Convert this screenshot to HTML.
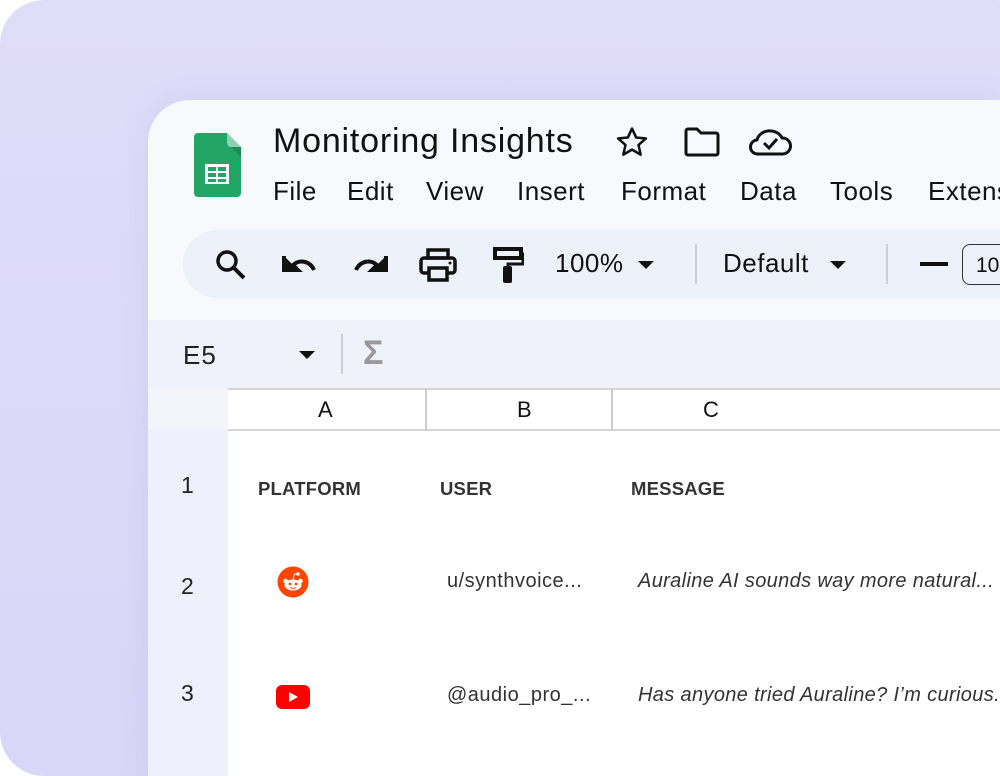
<!DOCTYPE html>
<html><head><style>
*{margin:0;padding:0;box-sizing:border-box}
html,body{width:1000px;height:776px;overflow:hidden}
body{background:#fff;font-family:"Liberation Sans",sans-serif;position:relative}
.bg{position:absolute;left:0;top:0;width:1040px;height:776px;border-radius:44px 44px 0 44px;background:linear-gradient(180deg,#e0ddf8,#d9d6f8)}
.card{position:absolute;left:148px;top:100px;width:852px;height:676px;border-radius:42px 0 0 0;background:#f8f9fd;overflow:hidden;box-shadow:0 0 30px rgba(120,110,200,.12)}
.a{position:absolute;white-space:nowrap}
.t{font-size:34px;color:#111;letter-spacing:.8px}
.m{font-size:26px;color:#111;top:176px;letter-spacing:.5px}
.pill{position:absolute;left:183px;top:230px;width:850px;height:68px;border-radius:34px;background:#edf1fa}
.sep{position:absolute;width:2px;background:#ccd;}
.tb{font-size:26px;color:#111;top:248px;letter-spacing:.5px}
.tri{position:absolute;width:0;height:0;border-left:8px solid transparent;border-right:8px solid transparent;border-top:8px solid #111}
.cell{font-size:20px;color:#333;letter-spacing:.5px}
.it{font-style:italic;color:#333;font-size:20px;letter-spacing:.35px}
.h{font-weight:bold;font-size:18.5px;color:#333;letter-spacing:.2px}
</style></head><body>
<div class="bg"></div>
<div class="card"></div>
<svg class="a" style="left:194px;top:133px" width="47" height="64" viewBox="0 0 47 64">
<path d="M4 0H33L47 14V60a4 4 0 0 1-4 4H4a4 4 0 0 1-4-4V4a4 4 0 0 1 4-4z" fill="#23a566"/>
<path d="M33 0L47 14H37a4 4 0 0 1-4-4z" fill="#8ed1b1"/>
<path d="M37 14L47 24V14z" fill="#1c8c55"/>
<rect x="11" y="31" width="24" height="20" fill="#fff"/>
<g fill="#23a566"><rect x="14" y="34" width="8" height="4"/><rect x="24" y="34" width="8" height="4"/><rect x="14" y="40" width="8" height="4"/><rect x="24" y="40" width="8" height="4"/><rect x="14" y="46" width="8" height="3"/><rect x="24" y="46" width="8" height="3"/></g>
</svg>
<div class="a t" style="left:273px;top:122px">Monitoring Insights</div>
<svg class="a" style="left:614px;top:125px" width="36" height="34" viewBox="0 0 24 24"><path d="M12 2.5l2.9 6.3 6.9.7-5.2 4.6 1.5 6.8L12 17.4l-6.1 3.5 1.5-6.8-5.2-4.6 6.9-.7z" fill="none" stroke="#111" stroke-width="1.8" stroke-linejoin="round"/></svg>
<svg class="a" style="left:683px;top:126px" width="38" height="32" viewBox="0 0 38 32"><path d="M3 5a2 2 0 0 1 2-2h9l4 4h15a2 2 0 0 1 2 2v18a2 2 0 0 1-2 2H5a2 2 0 0 1-2-2z" fill="none" stroke="#111" stroke-width="3" stroke-linejoin="round"/></svg>
<svg class="a" style="left:749px;top:126px" width="43" height="32" viewBox="0 0 43 32"><path d="M11 28H9a7 7 0 0 1-1-14A13 11 0 0 1 33 12a8 8 0 0 1 1 16z" fill="none" stroke="#111" stroke-width="3" stroke-linejoin="round"/><path d="M15 17l5 5 8-9" fill="none" stroke="#111" stroke-width="3"/></svg>
<div class="a m" style="left:273px">File</div>
<div class="a m" style="left:347px">Edit</div>
<div class="a m" style="left:426px">View</div>
<div class="a m" style="left:517px">Insert</div>
<div class="a m" style="left:621px">Format</div>
<div class="a m" style="left:740px">Data</div>
<div class="a m" style="left:830px">Tools</div>
<div class="a m" style="left:928px">Extensions</div>
<div class="pill"></div>
<svg class="a" style="left:214px;top:248px" width="34" height="34" viewBox="0 0 34 34"><circle cx="13" cy="13" r="9" fill="none" stroke="#111" stroke-width="3.5"/><path d="M20 20l10 10" stroke="#111" stroke-width="4"/></svg>
<svg class="a" style="left:282px;top:252px" width="38" height="26" viewBox="0 0 38 26"><path d="M2 4v14h14l-5-5c7-6 17-4 21 5" fill="none" stroke="#111" stroke-width="4"/><path d="M2 4v14h14z" fill="#111"/></svg>
<svg class="a" style="left:350px;top:252px" width="38" height="26" viewBox="0 0 38 26"><path d="M36 4v14H22l5-5c-7-6-17-4-21 5" fill="none" stroke="#111" stroke-width="4"/><path d="M36 4v14H22z" fill="#111"/></svg>
<svg class="a" style="left:419px;top:248px" width="38" height="34" viewBox="0 0 38 34"><rect x="9" y="2" width="20" height="8" fill="none" stroke="#111" stroke-width="3.5"/><rect x="2" y="10" width="34" height="15" rx="3" fill="none" stroke="#111" stroke-width="3.5"/><rect x="10" y="20" width="18" height="12" fill="#edf1fa" stroke="#111" stroke-width="3.5"/><circle cx="31" cy="15" r="1.5" fill="#111"/></svg>
<svg class="a" style="left:492px;top:246px" width="32" height="38" viewBox="0 0 32 38"><path d="M3 3h26v9H3z" fill="none" stroke="#111" stroke-width="4"/><path d="M29 8h2v10H16v4" fill="none" stroke="#111" stroke-width="3"/><rect x="11" y="20" width="9" height="17" rx="2" fill="#111"/></svg>
<div class="a tb" style="left:555px">100%</div>
<div class="tri" style="left:638px;top:261px"></div>
<div class="sep" style="left:695px;top:244px;height:40px"></div>
<div class="a tb" style="left:723px">Default</div>
<div class="tri" style="left:830px;top:261px"></div>
<div class="sep" style="left:886px;top:244px;height:40px"></div>
<div class="a" style="left:920px;top:262px;width:28px;height:4px;background:#111"></div>
<div class="a" style="left:962px;top:244px;width:60px;height:41px;border:1.5px solid #333;border-radius:8px;font-size:21px;padding:9px 0 0 13px;color:#111">10</div>
<div class="a" style="left:148px;top:320px;width:852px;height:68px;background:#eff2fb"></div>
<div class="a" style="left:183px;top:340px;font-size:26px;color:#222;letter-spacing:1px">E5</div>
<div class="tri" style="left:299px;top:351px"></div>
<div class="sep" style="left:341px;top:334px;height:40px;background:#ccd"></div>
<div class="a" style="left:363px;top:334px;font-size:34px;font-weight:bold;color:#999">Σ</div>
<div class="a" style="left:148px;top:388px;width:80px;height:388px;background:#eef0fb"></div>
<div class="a" style="left:148px;top:388px;width:80px;height:42px;background:#f4f5fc"></div>
<div class="a" style="left:228px;top:388px;width:772px;height:388px;background:#fff"></div>
<div class="a" style="left:228px;top:388px;width:772px;height:43px;border-top:2px solid #d6d6d6;border-bottom:2px solid #d6d6d6"></div>
<div class="a" style="left:425px;top:388px;width:2px;height:43px;background:#ccc"></div>
<div class="a" style="left:611px;top:388px;width:2px;height:43px;background:#ccc"></div>
<div class="a" style="left:318px;top:397px;font-size:22px;color:#111">A</div>
<div class="a" style="left:517px;top:397px;font-size:22px;color:#111">B</div>
<div class="a" style="left:703px;top:397px;font-size:22px;color:#111">C</div>
<div class="a" style="left:181px;top:472px;font-size:23px;color:#222">1</div>
<div class="a" style="left:181px;top:573px;font-size:23px;color:#222">2</div>
<div class="a" style="left:181px;top:680px;font-size:23px;color:#222">3</div>
<div class="a h" style="left:258px;top:478px">PLATFORM</div>
<div class="a h" style="left:440px;top:478px">USER</div>
<div class="a h" style="left:631px;top:478px">MESSAGE</div>
<svg class="a" style="left:277px;top:566px" width="32" height="32" viewBox="0 0 32 32"><circle cx="16" cy="16" r="15.5" fill="#ff4500"/><ellipse cx="16" cy="19" rx="8.5" ry="5.5" fill="#fff"/><circle cx="8.5" cy="15" r="2.3" fill="#fff"/><circle cx="23.5" cy="15" r="2.3" fill="#fff"/><circle cx="21" cy="8" r="1.8" fill="#fff"/><path d="M16 13.5l1.5-5.5 3.5 0" stroke="#fff" stroke-width="1" fill="none"/><circle cx="13" cy="18" r="1.4" fill="#ff4500"/><circle cx="19" cy="18" r="1.4" fill="#ff4500"/><path d="M13 21.5q3 1.8 6 0" stroke="#ff4500" stroke-width="1" fill="none"/></svg>
<svg class="a" style="left:276px;top:685px" width="34" height="24" viewBox="0 0 34 24"><rect width="34" height="24" rx="6" fill="#f00"/><path d="M13 7l9 5-9 5z" fill="#fff"/></svg>
<div class="a cell" style="left:447px;top:570px">u/synthvoice...</div>
<div class="a cell" style="left:447px;top:684px">@audio_pro_...</div>
<div class="a it" style="left:638px;top:570px">Auraline AI sounds way more natural...</div>
<div class="a it" style="left:638px;top:684px">Has anyone tried Auraline? I’m curious...</div>
</body></html>
